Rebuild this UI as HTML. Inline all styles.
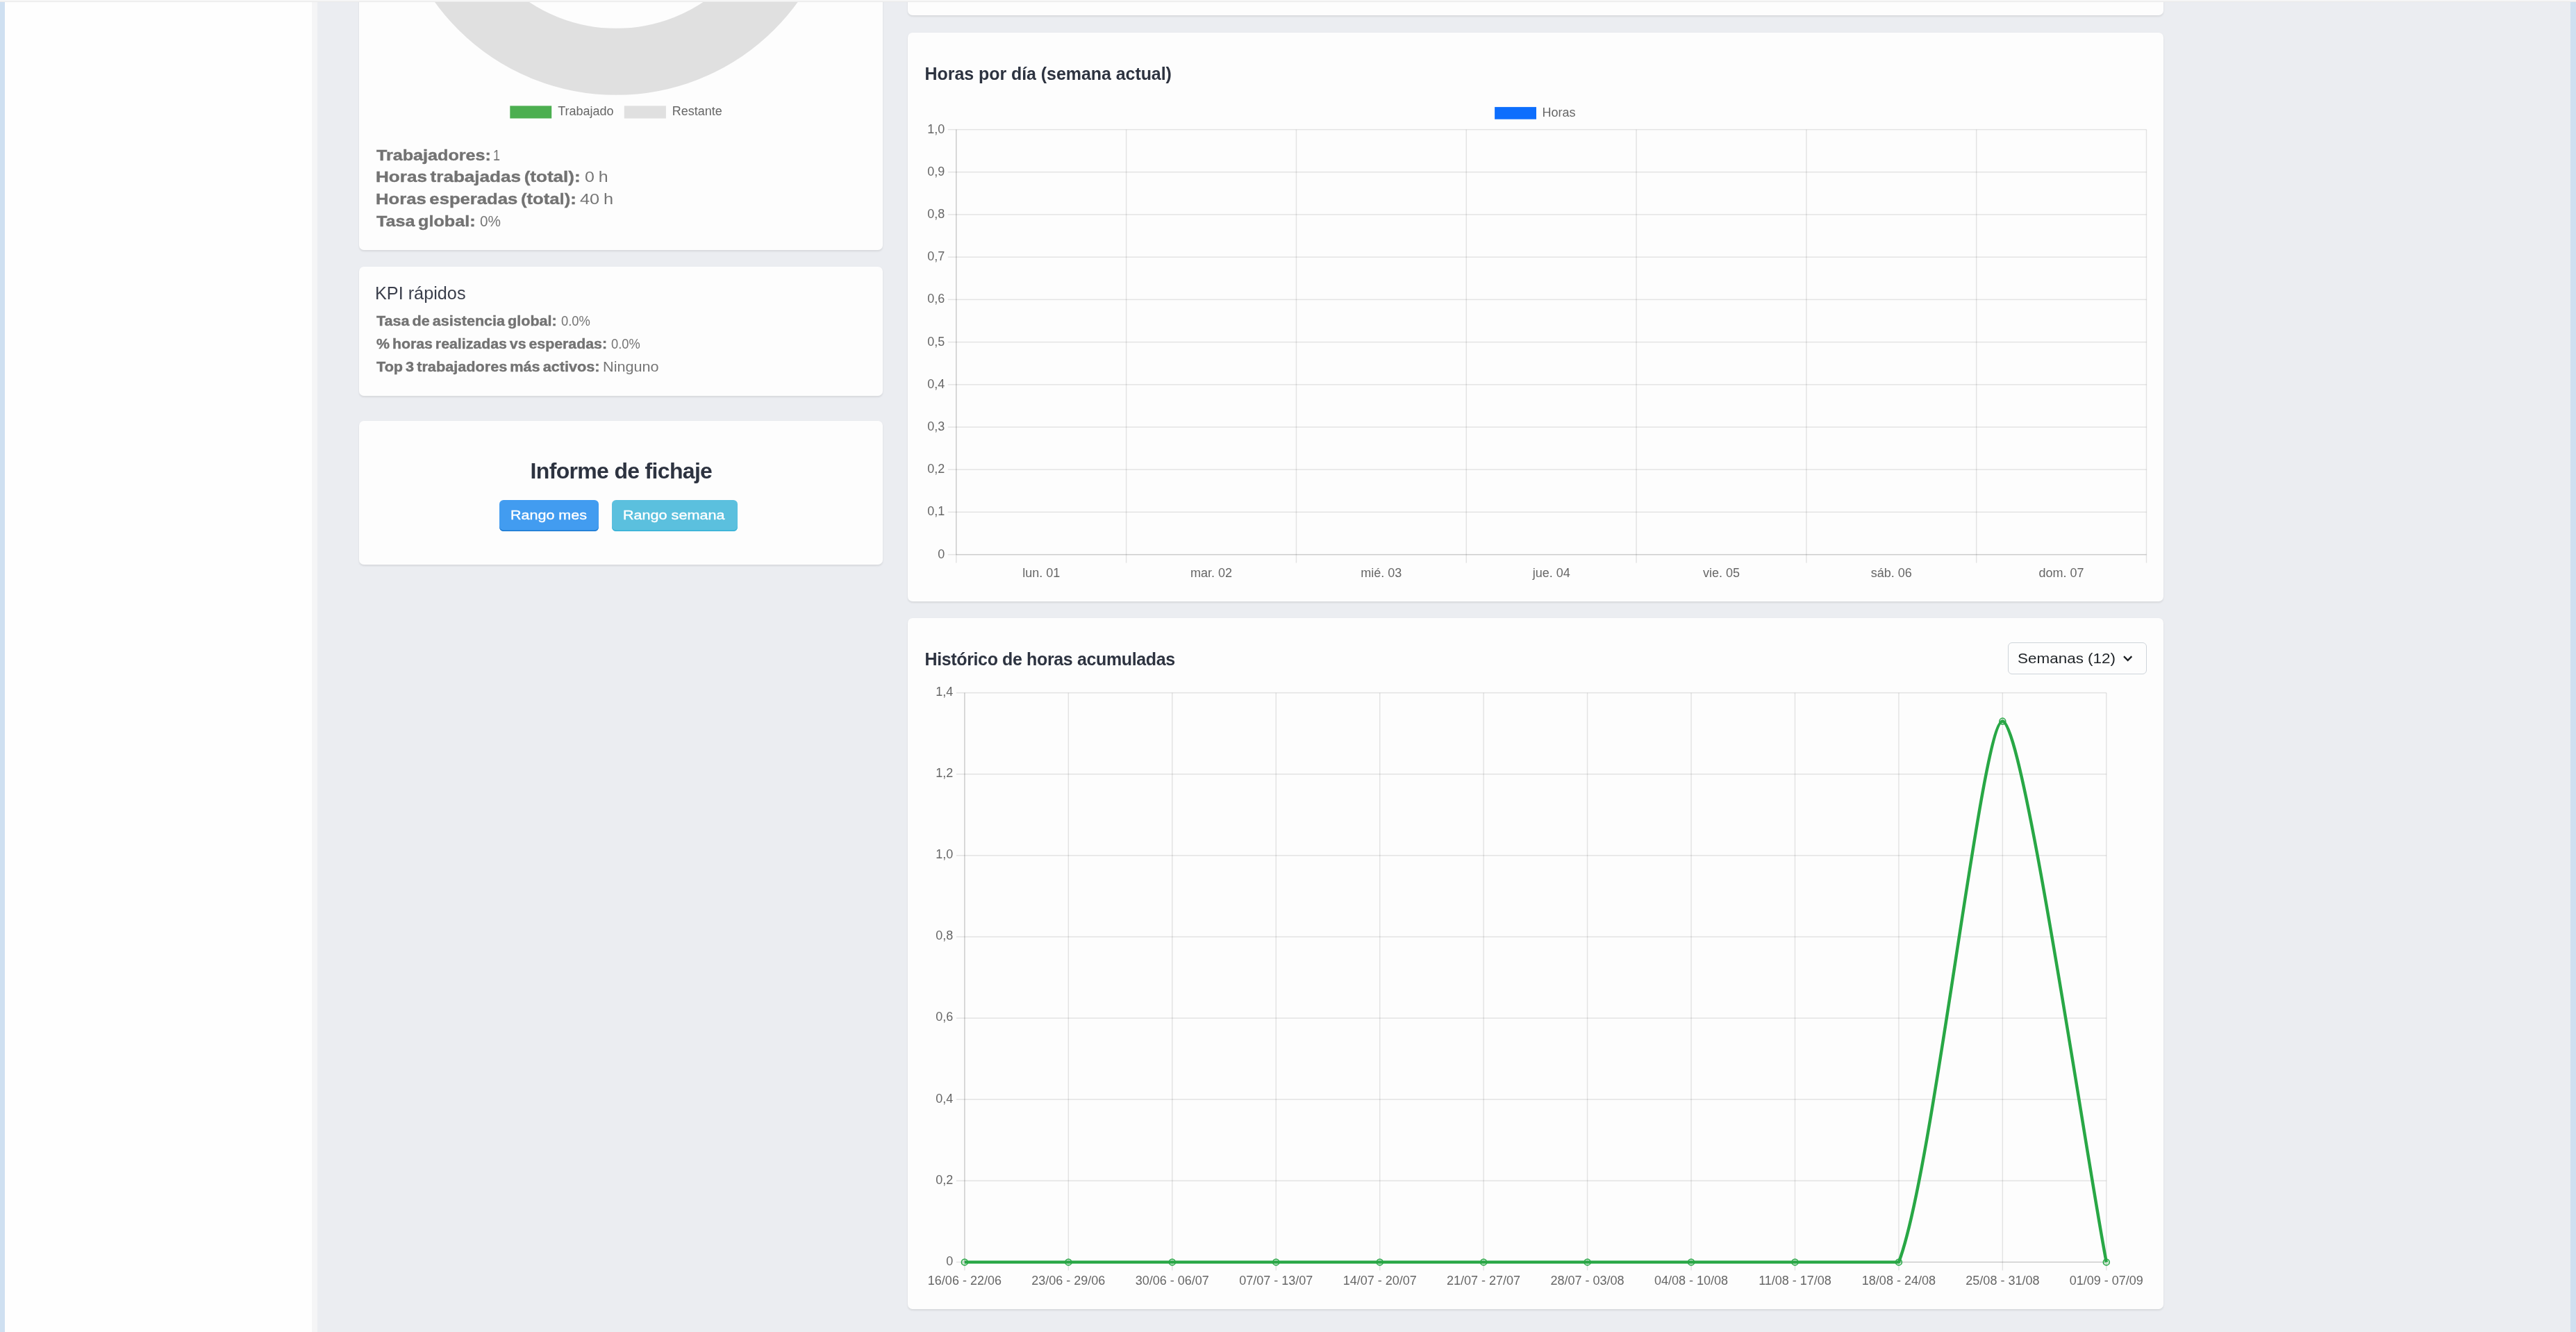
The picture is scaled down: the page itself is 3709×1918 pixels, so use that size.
<!DOCTYPE html>
<html lang="es">
<head>
<meta charset="utf-8">
<title>Panel de fichaje</title>
<style>
*{box-sizing:border-box;margin:0;padding:0}
html,body{width:3709px;height:1918px;overflow:hidden}
body{position:relative;background:#ebedf1;font-family:"Liberation Sans",sans-serif;color:#757575}
.abs{position:absolute}
.topline{left:0;top:0;width:3709px;height:3px;background:linear-gradient(#f5f5f5 0,#f5f5f5 60%,#e9e9e9 70%,#e9e9e9 100%)}
.lstrip{left:0;top:3px;width:7px;height:1915px;background:#cfe0f1}
.rstrip{left:3701px;top:3px;width:8px;height:1915px;background:#cfe0f1}
.sidebar{left:7px;top:3px;width:442px;height:1915px;background:#fefefe}
.sideedge{left:449px;top:3px;width:8px;height:1915px;background:#f5f5f6}
.card{position:absolute;background:#fdfdfd;border-radius:7px;box-shadow:0 1.5px 2.5px rgba(0,0,0,.085)}
.t{position:absolute;white-space:nowrap;line-height:1;color:#757575;transform-origin:0 0}
.b{font-weight:bold;color:#737373;-webkit-text-stroke:0.4px #737373}
.cj{font-size:18px;color:#666}
.yl{text-align:right}
.xl{width:200px;text-align:center}
.s1{font-size:22px}
.s2{font-size:19px}
.dk{color:#2d3340;font-weight:bold}
.kt{color:#3a3e4b}
.wh{color:#fff;-webkit-text-stroke:0.35px #fff}
.sl{color:#212529}
svg{position:absolute;left:0;top:0;overflow:visible}
.btn{position:absolute;border-radius:6px;height:44.7px;top:720.2px}
</style>
</head>
<body>
<div id="wrap" style="position:absolute;left:0;top:0;width:3709px;height:1918px;will-change:transform">
<div class="abs sidebar"></div>
<div class="abs sideedge"></div>

<!-- left column cards -->
<div class="card" id="c1" style="left:517px;top:-40px;width:754px;height:400px"></div>
<div class="card" id="c2" style="left:517px;top:384px;width:754px;height:186px"></div>
<div class="card" id="c3" style="left:517px;top:606px;width:754px;height:207px"></div>
<!-- right column cards -->
<div class="card" id="r0" style="left:1307px;top:-40px;width:1808px;height:61.5px"></div>
<div class="card" id="r1" style="left:1307px;top:47px;width:1808px;height:818.7px"></div>
<div class="card" id="r2" style="left:1307px;top:890px;width:1808px;height:995px"></div>

<svg width="3709" height="1918" viewBox="0 0 3709 1918">
<!-- donut -->
<circle cx="887.3" cy="-185.2" r="274" fill="none" stroke="#e0e0e0" stroke-width="96"/>
<rect x="1376.05" y="186.60" width="1.5" height="624.00" fill="rgba(0,0,0,0.1)"/>
<rect x="1620.86" y="186.60" width="1.5" height="624.00" fill="rgba(0,0,0,0.1)"/>
<rect x="1865.68" y="186.60" width="1.5" height="624.00" fill="rgba(0,0,0,0.1)"/>
<rect x="2110.49" y="186.60" width="1.5" height="624.00" fill="rgba(0,0,0,0.1)"/>
<rect x="2355.31" y="186.60" width="1.5" height="624.00" fill="rgba(0,0,0,0.1)"/>
<rect x="2600.12" y="186.60" width="1.5" height="624.00" fill="rgba(0,0,0,0.1)"/>
<rect x="2844.94" y="186.60" width="1.5" height="624.00" fill="rgba(0,0,0,0.1)"/>
<rect x="3089.75" y="186.60" width="1.5" height="624.00" fill="rgba(0,0,0,0.1)"/>
<rect x="1364.80" y="185.85" width="1725.70" height="1.5" fill="rgba(0,0,0,0.1)"/>
<rect x="1364.80" y="247.05" width="1725.70" height="1.5" fill="rgba(0,0,0,0.1)"/>
<rect x="1364.80" y="308.25" width="1725.70" height="1.5" fill="rgba(0,0,0,0.1)"/>
<rect x="1364.80" y="369.45" width="1725.70" height="1.5" fill="rgba(0,0,0,0.1)"/>
<rect x="1364.80" y="430.65" width="1725.70" height="1.5" fill="rgba(0,0,0,0.1)"/>
<rect x="1364.80" y="491.85" width="1725.70" height="1.5" fill="rgba(0,0,0,0.1)"/>
<rect x="1364.80" y="553.05" width="1725.70" height="1.5" fill="rgba(0,0,0,0.1)"/>
<rect x="1364.80" y="614.25" width="1725.70" height="1.5" fill="rgba(0,0,0,0.1)"/>
<rect x="1364.80" y="675.45" width="1725.70" height="1.5" fill="rgba(0,0,0,0.1)"/>
<rect x="1364.80" y="736.65" width="1725.70" height="1.5" fill="rgba(0,0,0,0.1)"/>
<rect x="1364.80" y="797.85" width="1725.70" height="1.5" fill="rgba(0,0,0,0.1)"/>
<rect x="1376.05" y="186.60" width="1.5" height="612.00" fill="rgba(0,0,0,0.1)"/>
<rect x="1376.80" y="797.85" width="1713.70" height="1.5" fill="rgba(0,0,0,0.1)"/>
<rect x="1388.15" y="997.60" width="1.5" height="831.80" fill="rgba(0,0,0,0.1)"/>
<rect x="1537.60" y="997.60" width="1.5" height="831.80" fill="rgba(0,0,0,0.1)"/>
<rect x="1687.04" y="997.60" width="1.5" height="831.80" fill="rgba(0,0,0,0.1)"/>
<rect x="1836.49" y="997.60" width="1.5" height="831.80" fill="rgba(0,0,0,0.1)"/>
<rect x="1985.93" y="997.60" width="1.5" height="831.80" fill="rgba(0,0,0,0.1)"/>
<rect x="2135.38" y="997.60" width="1.5" height="831.80" fill="rgba(0,0,0,0.1)"/>
<rect x="2284.82" y="997.60" width="1.5" height="831.80" fill="rgba(0,0,0,0.1)"/>
<rect x="2434.27" y="997.60" width="1.5" height="831.80" fill="rgba(0,0,0,0.1)"/>
<rect x="2583.71" y="997.60" width="1.5" height="831.80" fill="rgba(0,0,0,0.1)"/>
<rect x="2733.16" y="997.60" width="1.5" height="831.80" fill="rgba(0,0,0,0.1)"/>
<rect x="2882.60" y="997.60" width="1.5" height="831.80" fill="rgba(0,0,0,0.1)"/>
<rect x="3032.05" y="997.60" width="1.5" height="831.80" fill="rgba(0,0,0,0.1)"/>
<rect x="1376.90" y="996.85" width="1655.90" height="1.5" fill="rgba(0,0,0,0.1)"/>
<rect x="1376.90" y="1113.96" width="1655.90" height="1.5" fill="rgba(0,0,0,0.1)"/>
<rect x="1376.90" y="1231.08" width="1655.90" height="1.5" fill="rgba(0,0,0,0.1)"/>
<rect x="1376.90" y="1348.19" width="1655.90" height="1.5" fill="rgba(0,0,0,0.1)"/>
<rect x="1376.90" y="1465.31" width="1655.90" height="1.5" fill="rgba(0,0,0,0.1)"/>
<rect x="1376.90" y="1582.42" width="1655.90" height="1.5" fill="rgba(0,0,0,0.1)"/>
<rect x="1376.90" y="1699.54" width="1655.90" height="1.5" fill="rgba(0,0,0,0.1)"/>
<rect x="1376.90" y="1816.65" width="1655.90" height="1.5" fill="rgba(0,0,0,0.1)"/>
<rect x="1388.15" y="997.60" width="1.5" height="819.80" fill="rgba(0,0,0,0.1)"/>
<rect x="1388.90" y="1816.65" width="1643.90" height="1.5" fill="rgba(0,0,0,0.1)"/>
<clipPath id="lc"><rect x="1386.65" y="995.35" width="1648.4" height="824.3000000000001"/></clipPath>
<path d="M1388.90,1817.40 C1418.79,1817.40 1508.46,1817.40 1538.35,1817.40 C1568.23,1817.40 1657.90,1817.40 1687.79,1817.40 C1717.68,1817.40 1807.35,1817.40 1837.24,1817.40 C1867.13,1817.40 1956.79,1817.40 1986.68,1817.40 C2016.57,1817.40 2106.24,1817.40 2136.13,1817.40 C2166.02,1817.40 2255.68,1817.40 2285.57,1817.40 C2315.46,1817.40 2405.13,1817.40 2435.02,1817.40 C2464.91,1817.40 2554.57,1817.40 2584.46,1817.40 C2614.35,1817.40 2724.43,1817.40 2733.91,1817.40 C2784.21,1686.34 2853.47,1038.59 2883.35,1038.59 C2913.24,1038.59 3002.91,1661.64 3032.80,1817.40" fill="none" stroke="#28a745" stroke-width="4.5" stroke-linejoin="round" clip-path="url(#lc)"/>
<circle cx="1388.90" cy="1817.40" r="4.5" fill="rgba(40,167,69,0.2)" stroke="#28a745" stroke-width="1.5"/>
<circle cx="1538.35" cy="1817.40" r="4.5" fill="rgba(40,167,69,0.2)" stroke="#28a745" stroke-width="1.5"/>
<circle cx="1687.79" cy="1817.40" r="4.5" fill="rgba(40,167,69,0.2)" stroke="#28a745" stroke-width="1.5"/>
<circle cx="1837.24" cy="1817.40" r="4.5" fill="rgba(40,167,69,0.2)" stroke="#28a745" stroke-width="1.5"/>
<circle cx="1986.68" cy="1817.40" r="4.5" fill="rgba(40,167,69,0.2)" stroke="#28a745" stroke-width="1.5"/>
<circle cx="2136.13" cy="1817.40" r="4.5" fill="rgba(40,167,69,0.2)" stroke="#28a745" stroke-width="1.5"/>
<circle cx="2285.57" cy="1817.40" r="4.5" fill="rgba(40,167,69,0.2)" stroke="#28a745" stroke-width="1.5"/>
<circle cx="2435.02" cy="1817.40" r="4.5" fill="rgba(40,167,69,0.2)" stroke="#28a745" stroke-width="1.5"/>
<circle cx="2584.46" cy="1817.40" r="4.5" fill="rgba(40,167,69,0.2)" stroke="#28a745" stroke-width="1.5"/>
<circle cx="2733.91" cy="1817.40" r="4.5" fill="rgba(40,167,69,0.2)" stroke="#28a745" stroke-width="1.5"/>
<circle cx="2883.35" cy="1038.59" r="4.5" fill="rgba(40,167,69,0.2)" stroke="#28a745" stroke-width="1.5"/>
<circle cx="3032.80" cy="1817.40" r="4.5" fill="rgba(40,167,69,0.2)" stroke="#28a745" stroke-width="1.5"/>
<rect x="734.3" y="152.4" width="59.9" height="18.1" fill="#4caf50"/>
<rect x="898.8" y="152.4" width="60.1" height="18.1" fill="#e0e0e0"/>
<rect x="2152.1" y="154.1" width="59.9" height="17.6" fill="#0d6efd"/>
<!-- select chevron -->
<path d="M3058.0 945.1 L3063.65 950.75 L3069.3 945.1" fill="none" stroke="#1a1d20" stroke-width="2.3" stroke-linecap="butt" stroke-linejoin="miter"/>
</svg>

<!-- donut legend -->
<div class="t cj" id="lg1" style="left:803.2px;top:150.8px">Trabajado</div>
<div class="t cj" id="lg2" style="left:967.7px;top:150.8px">Restante</div>

<!-- select -->
<div class="abs" style="left:2891.2px;top:925.1px;width:199.6px;height:45.6px;border:1.5px solid #ced4da;border-radius:6px"></div>

<!-- buttons -->
<div class="btn" style="left:718.9px;width:143.1px;background:#429cf0;box-shadow:inset 0 -1.5px 0 #1b78cf"></div>
<div class="btn" style="left:881.1px;width:180.7px;background:#5bc0de;box-shadow:inset 0 -1.5px 0 #35b1d6"></div>

<div class="t b" id="s1b" style="left:541.80px;top:212.65px;font-size:22.5px;transform:scaleX(1.1180)">Trabajadores:</div>
<div class="t " id="s1v" style="left:710.24px;top:212.65px;font-size:22.5px;transform:scaleX(0.8000)">1</div>
<div class="t b" id="s2b" style="left:540.64px;top:244.05px;font-size:22.5px;transform:scaleX(1.1583);word-spacing:-2.2px">Horas trabajadas (total):</div>
<div class="t " id="s2v" style="left:841.70px;top:244.05px;font-size:22.5px;transform:scaleX(1.1087);word-spacing:-1px">0 h</div>
<div class="t b" id="s3b" style="left:540.66px;top:276.05px;font-size:22.5px;transform:scaleX(1.1405);word-spacing:-2.2px">Horas esperadas (total):</div>
<div class="t " id="s3v" style="left:835.00px;top:276.05px;font-size:22.5px;transform:scaleX(1.1259);word-spacing:-1px">40 h</div>
<div class="t b" id="s4b" style="left:541.80px;top:307.85px;font-size:22.5px;transform:scaleX(1.1190);word-spacing:-2.2px">Tasa global:</div>
<div class="t " id="s4v" style="left:691.00px;top:307.85px;font-size:22.5px;transform:scaleX(0.9227)">0%</div>
<div class="t kt" id="k0" style="left:540.08px;top:409.64px;font-size:25px;transform:scaleX(1.0100)">KPI rápidos</div>
<div class="t b" id="k1b" style="left:542.10px;top:453.19px;font-size:19.5px;transform:scaleX(1.1061);word-spacing:-1.8px">Tasa de asistencia global:</div>
<div class="t " id="k1v" style="left:807.60px;top:453.19px;font-size:19.5px;transform:scaleX(0.9431)">0.0%</div>
<div class="t b" id="k2b" style="left:542.10px;top:486.19px;font-size:19.5px;transform:scaleX(1.0926);word-spacing:-1.8px">% horas realizadas vs esperadas:</div>
<div class="t " id="k2v" style="left:879.90px;top:486.19px;font-size:19.5px;transform:scaleX(0.9386)">0.0%</div>
<div class="t b" id="k3b" style="left:542.10px;top:519.39px;font-size:19.5px;transform:scaleX(1.1112);word-spacing:-1.8px">Top 3 trabajadores más activos:</div>
<div class="t " id="k3v" style="left:868.39px;top:519.39px;font-size:19.5px;transform:scaleX(1.1101)">Ninguno</div>
<div class="t dk" id="i0" style="left:763.60px;top:661.81px;font-size:32px;letter-spacing:-0.679px">Informe de fichaje</div>
<div class="t wh" id="b1" style="left:735.17px;top:731.72px;font-size:19px;transform:scaleX(1.1321)">Rango mes</div>
<div class="t wh" id="b2" style="left:897.46px;top:731.72px;font-size:19px;transform:scaleX(1.1364)">Rango semana</div>
<div class="t dk" id="h1" style="left:1331.50px;top:93.84px;font-size:25px;letter-spacing:-0.058px">Horas por día (semana actual)</div>
<div class="t dk" id="h2" style="left:1331.50px;top:936.64px;font-size:25px;letter-spacing:-0.369px">Histórico de horas acumuladas</div>
<div class="t sl" id="sel" style="left:2905.20px;top:937.12px;font-size:21px;transform:scaleX(1.0695)">Semanas (12)</div>


<!-- bar legend -->
<div class="t cj" id="lg3" style="left:2220.6px;top:152.6px">Horas</div>

<div class="t cj yl" style="right:2348.8px;top:176.6px">1,0</div>
<div class="t cj yl" style="right:2348.8px;top:237.8px">0,9</div>
<div class="t cj yl" style="right:2348.8px;top:299.0px">0,8</div>
<div class="t cj yl" style="right:2348.8px;top:360.2px">0,7</div>
<div class="t cj yl" style="right:2348.8px;top:421.4px">0,6</div>
<div class="t cj yl" style="right:2348.8px;top:482.6px">0,5</div>
<div class="t cj yl" style="right:2348.8px;top:543.8px">0,4</div>
<div class="t cj yl" style="right:2348.8px;top:605.0px">0,3</div>
<div class="t cj yl" style="right:2348.8px;top:666.2px">0,2</div>
<div class="t cj yl" style="right:2348.8px;top:727.4px">0,1</div>
<div class="t cj yl" style="right:2348.8px;top:788.6px">0</div>
<div class="t cj xl" style="left:1399.2px;top:815.56px">lun. 01</div>
<div class="t cj xl" style="left:1644.0px;top:815.56px">mar. 02</div>
<div class="t cj xl" style="left:1888.8px;top:815.56px">mié. 03</div>
<div class="t cj xl" style="left:2133.7px;top:815.56px">jue. 04</div>
<div class="t cj xl" style="left:2378.5px;top:815.56px">vie. 05</div>
<div class="t cj xl" style="left:2623.3px;top:815.56px">sáb. 06</div>
<div class="t cj xl" style="left:2868.1px;top:815.56px">dom. 07</div>
<div class="t cj yl" style="right:2336.8px;top:986.9px">1,4</div>
<div class="t cj yl" style="right:2336.8px;top:1104.0px">1,2</div>
<div class="t cj yl" style="right:2336.8px;top:1221.1px">1,0</div>
<div class="t cj yl" style="right:2336.8px;top:1338.2px">0,8</div>
<div class="t cj yl" style="right:2336.8px;top:1455.4px">0,6</div>
<div class="t cj yl" style="right:2336.8px;top:1572.5px">0,4</div>
<div class="t cj yl" style="right:2336.8px;top:1689.6px">0,2</div>
<div class="t cj yl" style="right:2336.8px;top:1806.7px">0</div>
<div class="t cj xl" style="left:1288.9px;top:1834.66px">16/06 - 22/06</div>
<div class="t cj xl" style="left:1438.3px;top:1834.66px">23/06 - 29/06</div>
<div class="t cj xl" style="left:1587.8px;top:1834.66px">30/06 - 06/07</div>
<div class="t cj xl" style="left:1737.2px;top:1834.66px">07/07 - 13/07</div>
<div class="t cj xl" style="left:1886.7px;top:1834.66px">14/07 - 20/07</div>
<div class="t cj xl" style="left:2036.1px;top:1834.66px">21/07 - 27/07</div>
<div class="t cj xl" style="left:2185.6px;top:1834.66px">28/07 - 03/08</div>
<div class="t cj xl" style="left:2335.0px;top:1834.66px">04/08 - 10/08</div>
<div class="t cj xl" style="left:2484.5px;top:1834.66px">11/08 - 17/08</div>
<div class="t cj xl" style="left:2633.9px;top:1834.66px">18/08 - 24/08</div>
<div class="t cj xl" style="left:2783.4px;top:1834.66px">25/08 - 31/08</div>
<div class="t cj xl" style="left:2932.8px;top:1834.66px">01/09 - 07/09</div>

<div class="abs lstrip"></div>
<div class="abs rstrip"></div>
<div class="abs topline"></div>
</div>
</body>
</html>
